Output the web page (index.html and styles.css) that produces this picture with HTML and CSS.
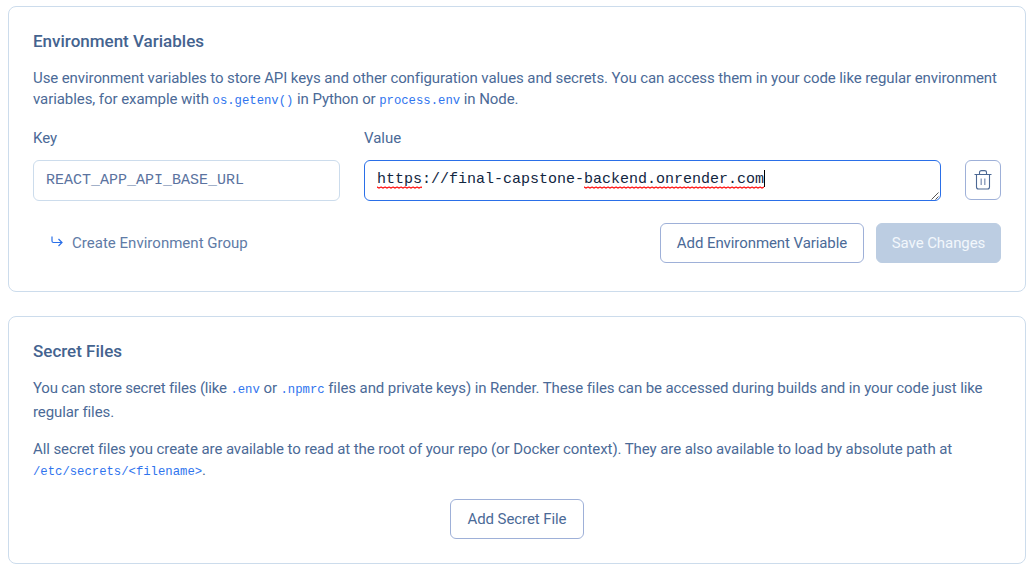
FILE: index.html
```html
<!DOCTYPE html>
<html lang="en">
<head>
<meta charset="utf-8">
<title>Environment</title>
<link rel="stylesheet" href="styles.css">
</head>
<body>
<main class="page">
  <section class="card card-env">
    <h2 class="title">Environment Variables</h2>
    <p class="text"><span class="line">Use environment variables to store API keys and other configuration values and secrets. You can access them in your code like regular environment</span> <span class="line"><span class="wide">variables, for example with </span><code>os.getenv()</code> in Python or <code>process.env</code><span class="wide"> in Node.</span></span></p>
    <div class="fields">
      <span class="label">Key</span>
      <span class="label">Value</span>
      <span></span>
      <div class="input input-key">REACT_APP_API_BASE_URL</div>
      <div class="input input-active"><span class="typo">https</span>://final-capstone-<span class="typo">backend.onrender.com</span><i class="caret"></i>
        <svg class="grip" width="8" height="8" viewBox="0 0 8 8"><path d="M.5 7.5l7-7M4.5 7.5l3-3"/></svg>
      </div>
      <button class="btn btn-icon" aria-label="Delete">
        <svg width="18" height="20" viewBox="0 0 18 20"><path d="M.5 4.500h17M5.500 4.500V2.500Q5.500 .6 7.500 .6h3Q12.500 .6 12.500 2.500v2M2.500 4.500v12.500q0 2 2 2h9q2 0 2-2v-12.500"/><path class="bars" d="M7.200 8.500v6.500M10.800 8.500v6.500"/></svg>
      </button>
    </div>
    <div class="actions">
      <a class="group-link"><svg width="12" height="12" viewBox="0 0 12 12"><path d="M1 .5V5q0 1.500 1.500 1.500H11M7.500 3l3.500 3.500L7.500 10"/></svg><span>Create Environment Group</span></a>
      <button class="btn btn-add">Add Environment Variable</button>
      <button class="btn btn-save">Save Changes</button>
    </div>
  </section>
  <section class="card card-files">
    <h2 class="title">Secret Files</h2>
    <p class="text text-loose"><span class="line"><span class="tight">You can store secret files (like </span><code>.env</code> or <code>.npmrc</code> files and private keys) in Render. These files can be accessed during builds and in your code just like</span> <span class="line">regular files.</span></p>
    <p class="text text-path"><span class="line">All secret files you create are available to read at the root of your repo (or Docker context). They are also available to load by absolute path at</span> <span class="line"><code>/etc/secrets/&lt;filename&gt;</code>.</span></p>
    <button class="btn btn-file">Add Secret File</button>
  </section>
</main>
</body>
</html>
```
FILE: styles.css
```css
* { box-sizing: border-box; }
body { margin: 0; background: #fff; color: #4b6a97; font: 15px/21px Roboto, sans-serif; }
.page { display: flex; flex-direction: column; gap: 24px; padding: 6px 9px 0 8px; }
.card { border: 1px solid #ccdcec; border-radius: 8px; padding: 24px; display: flex; flex-direction: column; }
.card-env { height: 286px; }
.card-files { height: 248px; }
.title { margin: 0; font-size: 17px; line-height: 21px; font-weight: 500; color: #44638f; }
.text { margin: 16px 0 0; letter-spacing: -0.095px; }
.tight { letter-spacing: -0.18px; }
.wide { letter-spacing: -0.07px; }
.line { display: block; white-space: nowrap; }
code { font: 12.25px/14px "Liberation Mono", monospace; letter-spacing: 0; color: #2f74ee; }
.fields { display: grid; grid-template-columns: 307px 577px 36px; column-gap: 24px; margin-top: 18px; }
.label { height: 32px; }
.input { height: 41px; border: 1px solid #ccdcec; border-radius: 6px; padding: 9px 12px; font: 15px/20px "Liberation Mono", monospace; position: relative; color: #5b739f; white-space: nowrap; }
.input-key { padding-top: 10px; }
.input-active { border-color: #2a6fe8; color: #12263f; }
.typo { padding-bottom: 1px; background: url("data:image/svg+xml,%3Csvg xmlns='http://www.w3.org/2000/svg' width='4' height='3'%3E%3Cpath d='M-1 .5Q0 .5 1 1.5T3 1.500T5 1.500' fill='none' stroke='red' stroke-width='1.1'/%3E%3C/svg%3E") repeat-x left bottom; }
.caret { display: inline-block; width: 1px; height: 17px; background: #000; vertical-align: -4px; }
.grip { position: absolute; right: 1px; bottom: 0; fill: none; stroke: #555; }
.btn { font: inherit; color: #4b6a97; background: #fff; border: 1px solid #9eb0d8; border-radius: 6px; height: 40px; padding: 0; white-space: nowrap; letter-spacing: -0.08px; }
.btn-icon { display: flex; align-items: center; justify-content: center; }
.btn svg { fill: none; stroke: #4c6894; stroke-width: 1.1; }
.btn .bars { stroke: #8496b8; stroke-width: 1.3; }
.actions { display: flex; margin-top: 22px; align-items: center; }
.group-link { display: flex; align-items: center; gap: 9px; margin: 0 auto 0 18px; color: #607ba6; letter-spacing: .02px; }
.group-link svg { fill: none; stroke: #2a6fe8; stroke-width: 1.2; margin-bottom: 3px; }
.btn-add { width: 204px; margin-right: 12px; }
.btn-save { width: 125px; background: #bccde2; border-color: #bccde2; color: #f2f7fc; }
.text-loose { line-height: 24px; margin-top: 14px; }
.text-path { margin-top: 15px; letter-spacing: -0.085px; }
.btn-file { width: 134px; align-self: center; margin-top: 18px; }
```
